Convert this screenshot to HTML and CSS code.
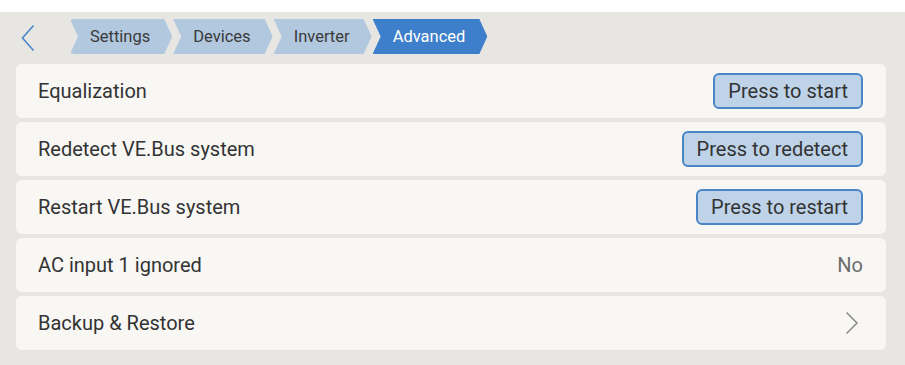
FILE: index.html
```html
<!DOCTYPE html>
<html lang="en">
  <head>
    <meta charset="UTF-8" />
    <meta name="viewport" content="width=device-width, initial-scale=1.0" />
    <title>Advanced</title>
    <link rel="stylesheet" href="styles.css">
  </head>
  <body>
    <div class="screen">
      <div class="header">
        <button class="back" aria-label="Back">
          <svg width="14" height="28" viewBox="0 0 14 28">
            <path d="M12.5 1.5 L1.5 14 L12.5 26.5" fill="none" stroke="#4b86c6" stroke-width="1.6" />
          </svg>
        </button>
        <div class="crumbs">
          <div class="crumb first">Settings</div>
          <div class="crumb">Devices</div>
          <div class="crumb">Inverter</div>
          <div class="crumb active">Advanced</div>
        </div>
      </div>
      <div class="list">
        <div class="row">
          <span class="label">Equalization</span>
          <button class="press">Press to start</button>
        </div>
        <div class="row">
          <span class="label">Redetect VE.Bus system</span>
          <button class="press">Press to redetect</button>
        </div>
        <div class="row">
          <span class="label">Restart VE.Bus system</span>
          <button class="press">Press to restart</button>
        </div>
        <div class="row">
          <span class="label">AC input 1 ignored</span>
          <span class="value">No</span>
        </div>
        <div class="row">
          <span class="label">Backup &amp; Restore</span>
          <svg class="arrow" width="14" height="24" viewBox="0 0 14 24">
            <path d="M1.5 1.5 L12 12 L1.5 22.5" fill="none" stroke="#8a8a88" stroke-width="1.5" />
          </svg>
        </div>
      </div>
    </div>
  </body>
</html>
```

FILE: styles.css
```css
body {
  margin: 0;
  background-color: #ffffff;
  font-family: Roboto, "Liberation Sans", sans-serif;
}

.screen {
  margin-top: 12px;
  height: 353px;
  background-color: #e7e6e2;
}

.header {
  display: flex;
  align-items: center;
  height: 52px;
  padding-left: 21px;
}

.back {
  background: none;
  border: none;
  padding: 0;
  width: 14px;
  height: 28px;
  margin-right: 35px;
  cursor: pointer;
}

.crumbs {
  display: flex;
  gap: 1px;
  margin-top: -3px;
}

.crumb {
  height: 35px;
  line-height: 35px;
  padding: 0 22px 0 20px;
  font-size: 16.5px;
  color: #3a3a3a;
  background-color: #b1c8df;
  clip-path: polygon(0 0, calc(100% - 8px) 0, 100% 50%, calc(100% - 8px) 100%, 0 100%, 8px 50%);
}

.crumb.first {
  border-radius: 4px 0 0 4px;
}

.crumb.active {
  background-color: #3d7fca;
  color: #ffffff;
}

.list {
  display: flex;
  flex-direction: column;
  gap: 4px;
  padding: 0 19px 0 16px;
}

.row {
  display: flex;
  align-items: center;
  justify-content: space-between;
  height: 54px;
  padding: 0 23px 0 22px;
  background-color: #f8f7f4;
  border-radius: 6px;
  font-size: 20px;
  color: #333333;
}

.press {
  height: 36px;
  padding: 0 13px;
  font-family: inherit;
  font-size: 20px;
  color: #333333;
  background-color: #bed2e8;
  border: 2px solid #4a86c6;
  border-radius: 6px;
  cursor: pointer;
}

.value {
  color: #6d6d6b;
}

.arrow {
  margin-right: 4px;
}
```
